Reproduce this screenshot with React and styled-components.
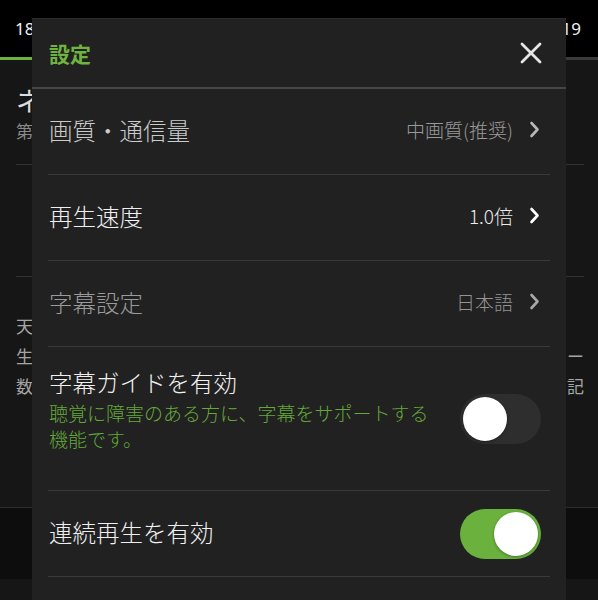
import { createGlobalStyle, styled } from "styled-components";

const GlobalStyle = createGlobalStyle`
  body {
    margin: 0;
    background: #000;
    font-family: "Noto Sans CJK JP", "Noto Sans", sans-serif;
  }
`;

const settings = [
  { label: "画質・通信量", value: "中画質(推奨)", tone: "soft" },
  { label: "再生速度", value: "1.0倍", tone: "bright" },
  { label: "字幕設定", value: "日本語", tone: "dim" },
];

const labelColors = { soft: "#cbcbcb", bright: "#f0f0f0", dim: "#9a9a9a" };
const valueColors = { soft: "#999", bright: "#ebebeb", dim: "#939393" };
const chevronColors = { soft: "#b8b8b8", bright: "#ffffff", dim: "#a8a8a8" };

const Chevron = ({ color }) => (
  <svg width="11" height="17" viewBox="0 0 11 17" fill="none">
    <path
      d="M2.5 2 L8.5 8.5 L2.5 15"
      stroke={color}
      strokeWidth="2.6"
      strokeLinecap="round"
      strokeLinejoin="round"
    />
  </svg>
);

const CloseIcon = () => (
  <svg width="22" height="22" viewBox="0 0 22 22" fill="none">
    <path
      d="M2 2 L20 20 M20 2 L2 20"
      stroke="#e6e6e6"
      strokeWidth="2.8"
      strokeLinecap="round"
    />
  </svg>
);

export default function App() {
  return (
    <>
      <GlobalStyle />
      <Screen>
        <StatusBar>
          <span>18</span>
          <span>19</span>
        </StatusBar>
        <TabLine>
          <TabSegment active />
          <TabSegment />
        </TabLine>
        <Content>
          <Heading>ネ</Heading>
          <Sub>第</Sub>
          <Divider />
          <EmptyBlock />
          <Divider />
          <Paragraph>
            <Line>
              <span>天</span>
              <span />
            </Line>
            <Line>
              <span>生</span>
              <span>ー</span>
            </Line>
            <Line>
              <span>数</span>
              <span>記</span>
            </Line>
          </Paragraph>
        </Content>
        <BottomBar />

        <Modal>
          <ModalHeader>
            <ModalTitle>設定</ModalTitle>
            <CloseButton>
              <CloseIcon />
            </CloseButton>
          </ModalHeader>
          <List>
            {settings.map((item) => (
              <Row key={item.label}>
                <Label tone={item.tone}>{item.label}</Label>
                <Value tone={item.tone}>
                  {item.value}
                  <Chevron color={chevronColors[item.tone]} />
                </Value>
              </Row>
            ))}
            <TallRow>
              <TextBlock>
                <Label tone="bright">字幕ガイドを有効</Label>
                <Description>
                  聴覚に障害のある方に、字幕をサポートする機能です。
                </Description>
              </TextBlock>
              <Toggle>
                <Knob />
              </Toggle>
            </TallRow>
            <Row>
              <Label tone="bright">連続再生を有効</Label>
              <Toggle on>
                <Knob on />
              </Toggle>
            </Row>
          </List>
        </Modal>
      </Screen>
    </>
  );
}

const Screen = styled.div`
  position: relative;
  width: 598px;
  height: 600px;
  overflow: hidden;
  background: #161616;
`;

const StatusBar = styled.div`
  display: flex;
  justify-content: space-between;
  align-items: center;
  height: 57px;
  padding: 0 17px 0 15px;
  background: #000;
  color: #f0f0f0;
  font-family: "Noto Sans", sans-serif;
  font-size: 17px;
`;

const TabLine = styled.div`
  display: flex;
  height: 3px;
`;

const TabSegment = styled.div`
  flex: 1;
  background: ${(props) => (props.active ? "#6ab13e" : "#3a3a3a")};
`;

const Content = styled.div`
  padding: 22px 14px 0 16px;
`;

const Heading = styled.div`
  font-size: 26px;
  line-height: 36px;
  color: #dcdcdc;
`;

const Sub = styled.div`
  margin-top: 1px;
  font-size: 17px;
  line-height: 24px;
  color: #8a8a8a;
`;

const Divider = styled.div`
  height: 1px;
  margin-top: 21px;
  background: #333;
`;

const EmptyBlock = styled.div`
  height: 90px;
`;

const Paragraph = styled.div`
  margin-top: 34px;
`;

const Line = styled.div`
  display: flex;
  justify-content: space-between;
  font-size: 17px;
  line-height: 30px;
  color: #a5a5a5;
`;

const BottomBar = styled.div`
  margin-top: 106px;
  height: 71px;
  border-top: 1px solid #2c2c2c;
  background: #0d0d0d;
`;

const Modal = styled.div`
  position: absolute;
  left: 32px;
  top: 18px;
  width: 534px;
  height: 600px;
  background: #212121;
  border-top: 1px solid #2c2c2c;
  box-sizing: border-box;
`;

const ModalHeader = styled.div`
  display: flex;
  align-items: center;
  justify-content: space-between;
  height: 68px;
  padding: 0 24px 0 17px;
  border-bottom: 2px solid #464646;
`;

const ModalTitle = styled.div`
  color: #6fb43f;
  font-size: 21px;
  font-weight: 700;
`;

const CloseButton = styled.div`
  display: flex;
  width: 22px;
  height: 22px;
`;

const List = styled.div`
  padding: 0 16px;
`;

const Row = styled.div`
  display: flex;
  align-items: center;
  justify-content: space-between;
  height: 86px;
  padding: 0 10px 4px 1px;
  border-bottom: 1px solid #393939;
  box-sizing: border-box;
`;

const TallRow = styled(Row)`
  height: 144px;
  align-items: flex-start;
  padding: 19px 10px 23px 1px;
`;

const Label = styled.div`
  font-size: 23.5px;
  font-weight: 300;
  line-height: 32px;
  color: ${(props) => labelColors[props.tone]};
`;

const Value = styled.div`
  display: flex;
  align-items: center;
  gap: 16px;
  font-size: 19px;
  font-weight: 300;
  color: ${(props) => valueColors[props.tone]};
`;

const TextBlock = styled.div`
  display: flex;
  flex-direction: column;
`;

const Description = styled.div`
  width: 394px;
  margin-top: 2px;
  font-size: 19px;
  font-weight: 300;
  line-height: 26px;
  color: #64a83a;
`;

const Toggle = styled.div`
  display: flex;
  align-items: center;
  justify-content: ${(props) => (props.on ? "flex-end" : "flex-start")};
  align-self: center;
  width: 81px;
  height: 50px;
  padding: 3px;
  margin: 4px -1px 0 0;
  border-radius: 25px;
  background: ${(props) => (props.on ? "#6ab13e" : "#2e2e2e")};
  box-sizing: border-box;
`;

const Knob = styled.div`
  width: 44px;
  height: 44px;
  border-radius: 50%;
  background: #fff;
  box-shadow: 0 1px 3px rgba(0, 0, 0, 0.35);
`;
